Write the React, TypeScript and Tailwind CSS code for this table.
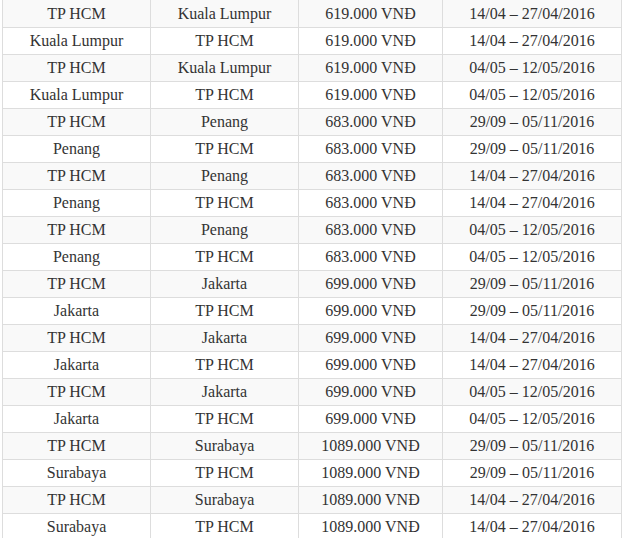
const rows: [string, string, string, string][] = [
  ["TP HCM", "Kuala Lumpur", "619.000 VNĐ", "14/04 – 27/04/2016"],
  ["Kuala Lumpur", "TP HCM", "619.000 VNĐ", "14/04 – 27/04/2016"],
  ["TP HCM", "Kuala Lumpur", "619.000 VNĐ", "04/05 – 12/05/2016"],
  ["Kuala Lumpur", "TP HCM", "619.000 VNĐ", "04/05 – 12/05/2016"],
  ["TP HCM", "Penang", "683.000 VNĐ", "29/09 – 05/11/2016"],
  ["Penang", "TP HCM", "683.000 VNĐ", "29/09 – 05/11/2016"],
  ["TP HCM", "Penang", "683.000 VNĐ", "14/04 – 27/04/2016"],
  ["Penang", "TP HCM", "683.000 VNĐ", "14/04 – 27/04/2016"],
  ["TP HCM", "Penang", "683.000 VNĐ", "04/05 – 12/05/2016"],
  ["Penang", "TP HCM", "683.000 VNĐ", "04/05 – 12/05/2016"],
  ["TP HCM", "Jakarta", "699.000 VNĐ", "29/09 – 05/11/2016"],
  ["Jakarta", "TP HCM", "699.000 VNĐ", "29/09 – 05/11/2016"],
  ["TP HCM", "Jakarta", "699.000 VNĐ", "14/04 – 27/04/2016"],
  ["Jakarta", "TP HCM", "699.000 VNĐ", "14/04 – 27/04/2016"],
  ["TP HCM", "Jakarta", "699.000 VNĐ", "04/05 – 12/05/2016"],
  ["Jakarta", "TP HCM", "699.000 VNĐ", "04/05 – 12/05/2016"],
  ["TP HCM", "Surabaya", "1089.000 VNĐ", "29/09 – 05/11/2016"],
  ["Surabaya", "TP HCM", "1089.000 VNĐ", "29/09 – 05/11/2016"],
  ["TP HCM", "Surabaya", "1089.000 VNĐ", "14/04 – 27/04/2016"],
  ["Surabaya", "TP HCM", "1089.000 VNĐ", "14/04 – 27/04/2016"],
];

export default function App() {
  return (
    <div className="h-[538px] w-[622px] overflow-hidden bg-white font-['Liberation_Serif','Times_New_Roman',serif]">
      <div className="ml-[2px] grid w-[620px] grid-cols-[148px_148px_144px_179px] border-l border-[#ddd] text-[16px] text-[#333]">
        {rows.map((row, i) =>
          row.map((cell, j) => (
            <div
              key={`${i}-${j}`}
              className={`flex items-center justify-center border-b border-r border-[#ddd] whitespace-nowrap ${
                i === 0 ? "h-[28px]" : "h-[27px]"
              } ${i % 2 === 0 ? "bg-[#f9f9f9]" : "bg-white"}`}
            >
              {cell}
            </div>
          ))
        )}
      </div>
    </div>
  );
}
